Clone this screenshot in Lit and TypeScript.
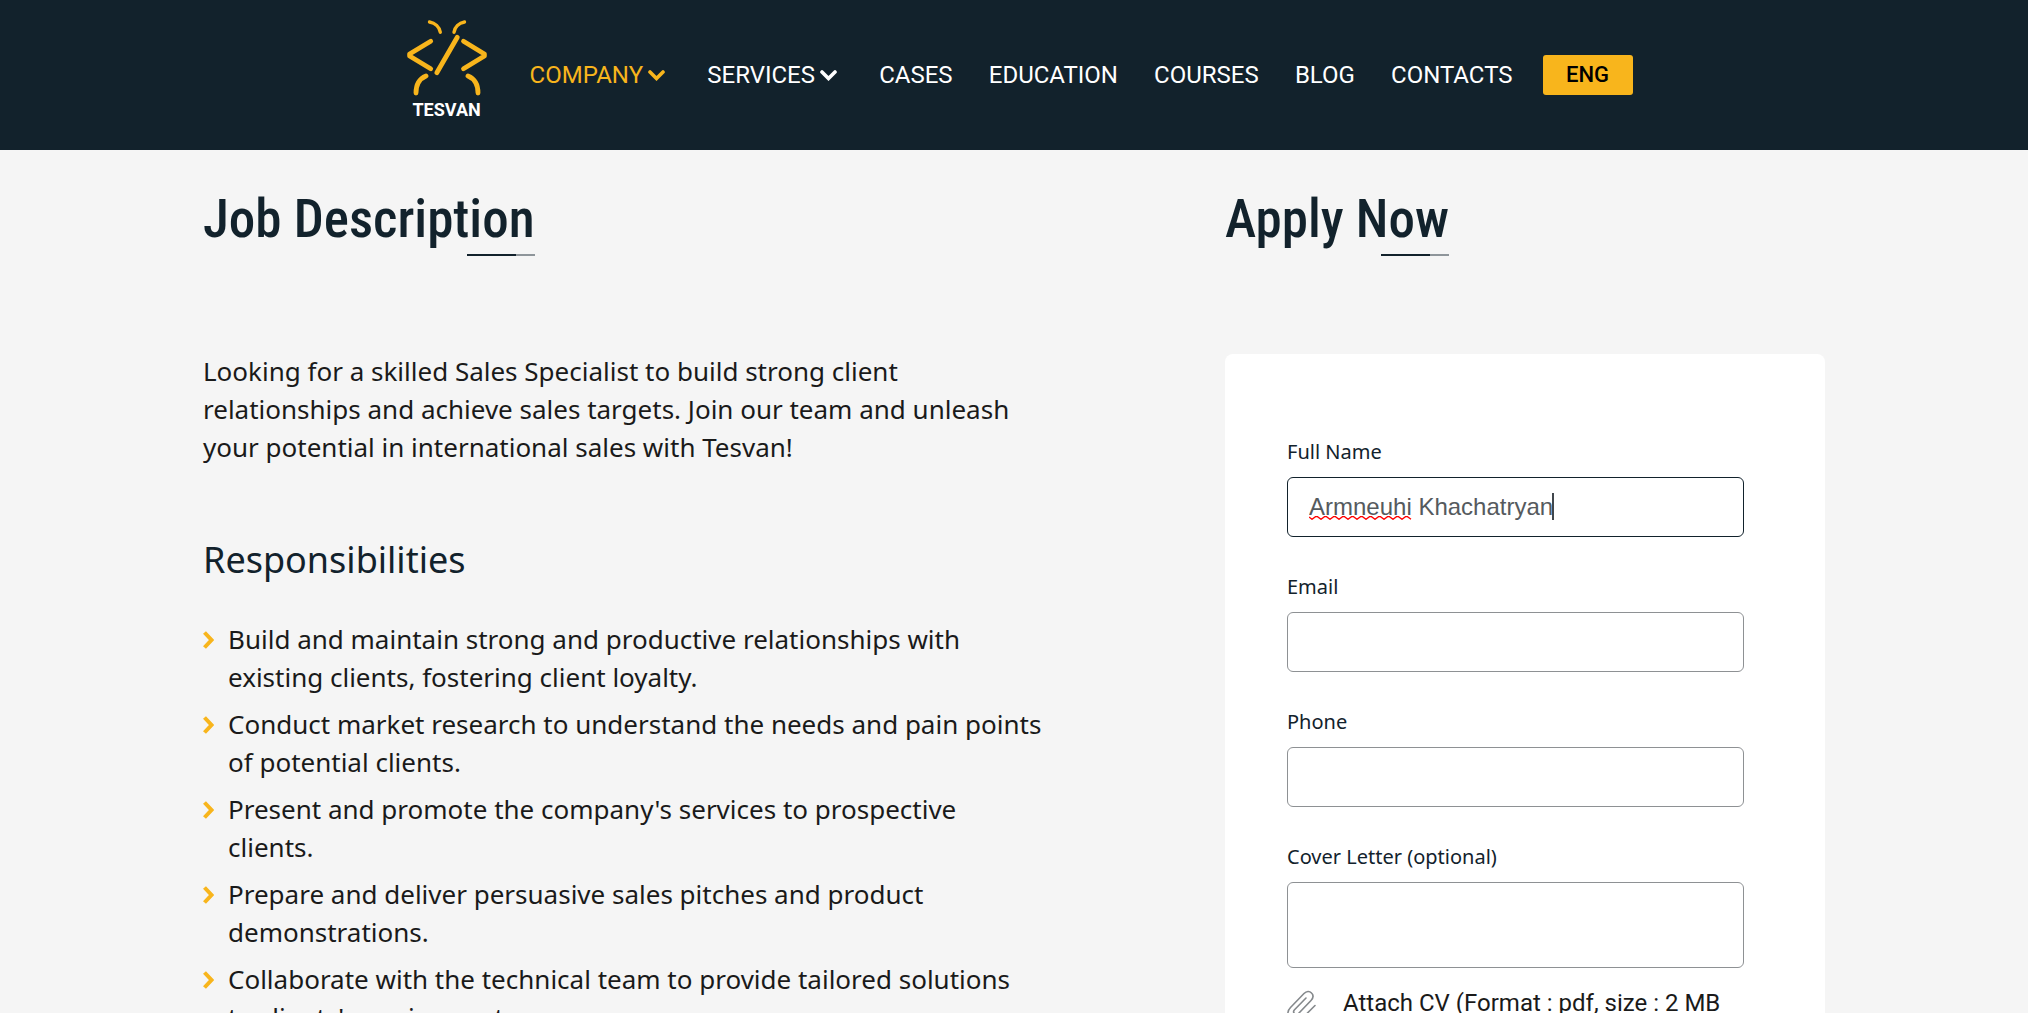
import { LitElement, html, css } from "lit";
import { customElement, property } from "lit/decorators.js";

const NAV = [
  { label: "COMPANY", menu: true, active: true },
  { label: "SERVICES", menu: true },
  { label: "CASES" },
  { label: "EDUCATION" },
  { label: "COURSES" },
  { label: "BLOG" },
  { label: "CONTACTS" },
];

const DUTIES = [
  "Build and maintain strong and productive relationships with\nexisting clients, fostering client loyalty.",
  "Conduct market research to understand the needs and pain points\nof potential clients.",
  "Present and promote the company's services to prospective\nclients.",
  "Prepare and deliver persuasive sales pitches and product\ndemonstrations.",
  "Collaborate with the technical team to provide tailored solutions\nto clients' requirements.",
];

@customElement("site-header")
export class SiteHeader extends LitElement {
  static styles = css`
    :host {
      display: block;
    }
    .bar {
      display: flex;
      align-items: center;
      height: 150px;
      box-sizing: border-box;
      padding: 0 19.5% 0 20%;
      background: #12222c;
    }
    .brand {
      display: flex;
      flex-direction: column;
      align-items: center;
      margin: 0 43px 10px 1px;
      color: #fff;
      font: 700 18px/20px Roboto, sans-serif;
      text-decoration: none;
    }
    .bug {
      display: block;
      width: 80px;
      height: 76px;
      margin-bottom: 4px;
      fill: none;
      stroke: #f8b51c;
      stroke-linecap: round;
      stroke-linejoin: round;
    }
    nav {
      flex: 1;
    }
    .links {
      display: flex;
      justify-content: space-between;
      margin: 0;
      padding: 0;
      list-style: none;
    }
    .link {
      display: flex;
      align-items: center;
      gap: 5px;
      color: #fff;
      font: 400 24px/32px Roboto, sans-serif;
      text-decoration: none;
      white-space: nowrap;
    }
    .menu {
      padding-right: 6px;
    }
    .active {
      color: #f8b51c;
    }
    .chevron {
      width: 17px;
      height: 11px;
      fill: none;
      stroke: currentColor;
      stroke-width: 3.6;
      stroke-linecap: round;
    }
    .lang {
      margin-left: 30px;
      width: 90px;
      height: 40px;
      padding: 0;
      border: 0;
      border-radius: 3px;
      background: #f8b51c;
      color: #000;
      font: 500 22px/40px Roboto, sans-serif;
    }
  `;

  render() {
    return html`<header class="bar">
      <a class="brand" href="#">
        <svg class="bug" viewBox="0 0 80 76" aria-hidden="true">
          <g stroke-width="3.4">
            <path d="M22.5 2C28 3 32.5 7 33.3 12.3" />
            <path d="M57.5 2C52 3 47.8 7 47 12.3" />
          </g>
          <g stroke-width="4.8">
            <path d="M23.7 21.3L2.6 34v2L23.7 48.7" />
            <path d="M56.5 21.3L77.4 34v2L56.5 48.7" />
            <path d="M50.3 17.3L29.8 52.7" />
            <path d="M19 56C13 58.500 9 64 9 73" />
            <path d="M61 56C67 58.500 71 64 71 73" />
          </g>
        </svg>
        <span>TESVAN</span>
      </a>
      <nav>
        <ul class="links">
          ${NAV.map(
            (item) => html`<li>
              <a class="link ${item.menu ? "menu" : ""} ${item.active ? "active" : ""}" href="#">
                <span>${item.label}</span>
                ${item.menu
                  ? html`<svg class="chevron" viewBox="0 0 17 11" aria-hidden="true">
                      <path d="M2 2L8.500 8.500L15 2" />
                    </svg>`
                  : ""}
              </a>
            </li>`
          )}
        </ul>
      </nav>
      <button class="lang" type="button">ENG</button>
    </header>`;
  }
}

@customElement("section-title")
export class SectionTitle extends LitElement {
  @property() text = "";

  static styles = css`
    :host {
      display: block;
      margin-bottom: 98px;
    }
    .title {
      display: table;
      margin: 0;
      color: #12222c;
      font: 500 53px/60px "Roboto Condensed", sans-serif;
      white-space: nowrap;
    }
    .title::after {
      content: "";
      display: block;
      width: 68px;
      height: 2px;
      margin: 5px 0 0 auto;
      background: linear-gradient(90deg, #12222c 49px, #8e959a 49px);
    }
  `;

  render() {
    return html`<h2 class="title">${this.text}</h2>`;
  }
}

@customElement("job-description")
export class JobDescription extends LitElement {
  static styles = css`
    :host {
      display: block;
      color: #1a1a1a;
      font: 400 26px/38px "Noto Sans", sans-serif;
    }
    .intro {
      margin: -2px 0 72px;
    }
    .sub {
      margin: 0 0 38px;
      color: #12222c;
      font: 400 36px/44px "Noto Sans", sans-serif;
    }
    .duties {
      display: grid;
      gap: 9px;
      margin: 0;
      padding: 0;
      list-style: none;
    }
    .duty {
      display: flex;
      align-items: flex-start;
      gap: 14px;
      white-space: pre-line;
    }
    .mark {
      flex: none;
      width: 11px;
      height: 18px;
      margin-top: 11px;
      fill: none;
      stroke: #f8b51c;
      stroke-width: 4;
    }
  `;

  render() {
    return html`<section>
      <section-title text="Job Description"></section-title>
      <p class="intro">
        Looking for a skilled Sales Specialist to build strong client relationships and achieve
        sales targets. Join our team and unleash your potential in international sales with Tesvan!
      </p>
      <h3 class="sub">Responsibilities</h3>
      <ul class="duties">
        ${DUTIES.map(
          (duty) => html`<li class="duty">
            <svg class="mark" viewBox="0 0 11 18" aria-hidden="true">
              <path d="M1.500 1.500L8.500 9L1.500 16.500" />
            </svg>
            <span>${duty}</span>
          </li>`
        )}
      </ul>
    </section>`;
  }
}

@customElement("apply-form")
export class ApplyForm extends LitElement {
  static styles = css`
    :host {
      display: block;
    }
    .card {
      display: grid;
      gap: 36px;
      padding: 84px 81px 84px 62px;
      border-radius: 8px;
      background: #fff;
    }
    .field {
      display: grid;
      gap: 11px;
      position: relative;
    }
    .label {
      color: #12222c;
      font: 400 20px/28px "Noto Sans", sans-serif;
    }
    .box {
      display: block;
      width: 100%;
      height: 60px;
      box-sizing: border-box;
      padding: 0 21px;
      border: 1px solid #8e9194;
      border-radius: 6px;
      outline: 0;
      background: #fff;
      color: #555a5e;
      font: 400 24px/28px "Liberation Sans", sans-serif;
      resize: none;
    }
    .current {
      border-color: #12222c;
    }
    .tall {
      height: 86px;
    }
    .squiggle {
      position: absolute;
      left: 22px;
      bottom: 17px;
      width: 103px;
      height: 4px;
      fill: none;
      stroke: #f00;
      stroke-width: 1.3;
    }
    .caret {
      position: absolute;
      left: 265px;
      bottom: 17px;
      width: 2px;
      height: 27px;
      background: #41474c;
    }
    .attach {
      display: flex;
      align-items: flex-start;
      gap: 27px;
      margin-top: -20px;
      color: #1a1a1a;
      font: 400 24px/38px Roboto, sans-serif;
      white-space: nowrap;
    }
    .file {
      position: absolute;
      width: 1px;
      height: 1px;
      opacity: 0;
    }
    .clip {
      flex: none;
      width: 29px;
      height: 32px;
      margin-top: 6px;
      fill: none;
      stroke: #85898c;
      stroke-width: 1.6;
      stroke-linecap: round;
      stroke-linejoin: round;
    }
  `;

  render() {
    return html`<section>
      <section-title text="Apply Now"></section-title>
      <form class="card">
        <div class="field">
          <label class="label" for="name">Full Name</label>
          <input class="box current" id="name" type="text" value="Armneuhi Khachatryan" />
          <svg class="squiggle" viewBox="0 0 103 4" aria-hidden="true">
            <path
              d="M0 1L3 3.300L6.500 .7H8.500L12 3.300L15.500 .7H17.500L21 3.300L24.500 .7H26.500L30 3.300L33.500 .7H35.500L39 3.300L42.500 .7H44.500L48 3.300L51.500 .7H53.500L57 3.300L60.500 .7H62.500L66 3.300L69.500 .7H71.500L75 3.300L78.500 .7H80.500L84 3.300L87.500 .7H89.500L93 3.300L96.500 .7H98.500L102 3.300"
            />
          </svg>
          <span class="caret"></span>
        </div>
        <div class="field">
          <label class="label" for="email">Email</label>
          <input class="box" id="email" type="email" />
        </div>
        <div class="field">
          <label class="label" for="phone">Phone</label>
          <input class="box" id="phone" type="tel" />
        </div>
        <div class="field">
          <label class="label" for="cover">Cover Letter (optional)</label>
          <textarea class="box tall" id="cover"></textarea>
        </div>
        <label class="attach">
          <input class="file" type="file" accept=".pdf" />
          <svg class="clip" viewBox="0 0 29 32" aria-hidden="true">
            <path
              d="M28 15.500L15 28.500C12 31.500 7 31.500 4 28.500C0 25 0 21 3.500 17.500L17 3.500C19.500 1 22.500 .8 24.500 3C26.500 5 26.300 8 24 10.500L11.500 23.500C10.300 24.700 8.500 24.700 7.500 23.700C6.300 22.500 6.400 21 7.500 19.800L19 8"
            />
          </svg>
          <span>Attach CV (Format : pdf, size : 2 MB</span>
        </label>
      </form>
    </section>`;
  }
}

@customElement("app-root")
export class AppRoot extends LitElement {
  static styles = css`
    :host {
      display: block;
      height: 100vh;
      overflow: hidden;
      background: #f5f5f5;
    }
    .page {
      display: grid;
      grid-template-columns: minmax(0, 847fr) minmax(0, 600fr);
      gap: 175px;
      max-width: 1622px;
      margin: 0 auto;
      padding: 39px 0;
    }
  `;

  render() {
    return html`<site-header></site-header>
      <main class="page">
        <job-description></job-description>
        <apply-form></apply-form>
      </main>`;
  }
}
